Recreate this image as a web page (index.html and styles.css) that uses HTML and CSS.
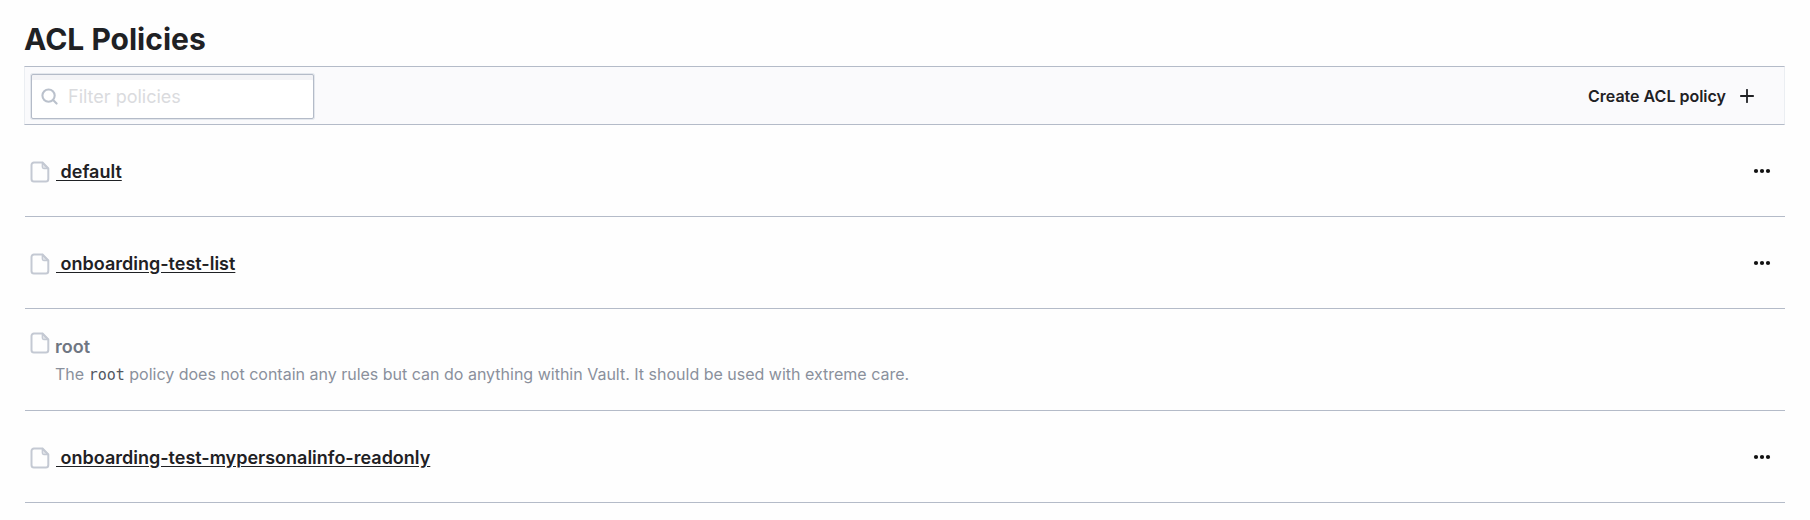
FILE: index.html
```html
<!DOCTYPE html>
<html lang="en">
<head>
<meta charset="utf-8">
<title>ACL Policies</title>
<link rel="stylesheet" href="styles.css">
</head>
<body>
<svg class="sprite" aria-hidden="true">
  <symbol id="file" viewBox="0 0 20 22">
    <path d="M4 1.500H12.500L18.300 7.500V18a2.500 2.500 0 0 1-2.500 2.500H4A2.500 2.500 0 0 1 1.500 18V4A2.500 2.500 0 0 1 4 1.500Z" fill="none" stroke="currentColor" stroke-width="2" stroke-linejoin="round"/>
    <path d="M12.300 1.500V6a1.500 1.500 0 0 0 1.500 1.500H18.300Z" fill="currentColor" fill-opacity=".5" stroke="currentColor" stroke-width="1.300" stroke-linejoin="round"/>
  </symbol>
  <symbol id="more" viewBox="0 0 18 6">
    <g fill="currentColor"><circle cx="3" cy="3" r="2.100"/><circle cx="9" cy="3" r="2.100"/><circle cx="15" cy="3" r="2.100"/></g>
  </symbol>
</svg>
<main class="page">
  <h1 class="title">ACL Policies</h1>
  <div class="toolbar">
    <label class="filter">
      <svg class="filter-icon" viewBox="0 0 18 18" aria-hidden="true"><g fill="none" stroke="currentColor" stroke-width="2.200" stroke-linecap="round"><circle cx="8" cy="8" r="6.500"/><path d="M12.800 12.800L16.500 16.500"/></g></svg>
      <input class="filter-input" type="text" placeholder="Filter policies" aria-label="Filter policies">
    </label>
    <a class="create" href="#">Create ACL policy
      <svg class="plus" viewBox="0 0 14 14" aria-hidden="true"><path d="M7 .8V13.200M.8 7H13.200" fill="none" stroke="currentColor" stroke-width="1.800" stroke-linecap="round"/></svg>
    </a>
  </div>
  <ul class="list">
    <li class="row">
      <svg class="file" aria-hidden="true"><use href="#file"/></svg>
      <a class="name" href="#">&nbsp;default</a>
      <button class="menu" type="button" aria-label="More options"><svg class="dots"><use href="#more"/></svg></button>
    </li>
    <li class="row">
      <svg class="file" aria-hidden="true"><use href="#file"/></svg>
      <a class="name" href="#">&nbsp;onboarding-test-list</a>
      <button class="menu" type="button" aria-label="More options"><svg class="dots"><use href="#more"/></svg></button>
    </li>
    <li class="row row-static">
      <svg class="file" aria-hidden="true"><use href="#file"/></svg>
      <div class="info">
        <span class="root-name">root</span>
        <p class="note">The <code class="code">root</code> policy does not contain any rules but can do anything within Vault. It should be used with extreme care.</p>
      </div>
    </li>
    <li class="row">
      <svg class="file" aria-hidden="true"><use href="#file"/></svg>
      <a class="name" href="#">&nbsp;onboarding-test-mypersonalinfo-readonly</a>
      <button class="menu" type="button" aria-label="More options"><svg class="dots"><use href="#more"/></svg></button>
    </li>
  </ul>
</main>
</body>
</html>
```
FILE: styles.css
```css
* { box-sizing: border-box; }
body {
  margin: 0;
  background: #fefefe;
  color: #1f2124;
  font-family: Inter, "Liberation Sans", sans-serif;
}
.sprite { display: none; }
.page { padding: 19px 25px 0 24px; }
.title {
  margin: 0;
  padding-bottom: 7px;
  font-size: 30px;
  line-height: 40px;
  font-weight: 700;
}
.toolbar {
  display: flex;
  align-items: center;
  justify-content: space-between;
  padding: 7px 30px 5px 6px;
  background: #fafafc;
  border: 1px solid #ebeef2;
  border-top-color: #b4bbc8;
  border-bottom-color: #b4bbc8;
}
.filter {
  display: flex;
  align-items: center;
  gap: 10px;
  width: 283px;
  height: 45px;
  padding: 0 9px;
  background: #fff;
  border: 1px solid #b4bbc8;
  border-radius: 2px;
  box-shadow: inset 0 5px 0 #f3f3f6, 0 0 0 1px #e3e7ed;
}
.filter-icon { width: 17px; height: 17px; color: #bac1cc; }
.filter-input {
  flex: 1;
  min-width: 0;
  padding: 0;
  border: 0;
  outline: 0;
  background: none;
  color: inherit;
  font: 400 18px/24px Inter, "Liberation Sans", sans-serif;
}
.filter-input::placeholder { color: #dadbde; opacity: 1; }
.create {
  display: flex;
  align-items: center;
  gap: 14px;
  padding-bottom: 2px;
  color: #1f2124;
  font-size: 16px;
  line-height: 24px;
  font-weight: 600;
  text-decoration: none;
}
.plus { width: 14px; height: 14px; }
.list { margin: 0; padding: 0 0 0 1px; list-style: none; }
.row {
  display: flex;
  align-items: center;
  gap: 6px;
  min-height: 92px;
  padding: 3px 14px 0 5px;
  border-bottom: 1px solid #b4bbc8;
}
.file { width: 20px; height: 22px; flex: none; color: #c4c9d3; }
.name {
  color: #1f2124;
  font-size: 18px;
  line-height: 24px;
  font-weight: 600;
  text-underline-offset: 2px;
}
.menu {
  display: flex;
  margin-left: auto;
  padding: 8px 0 11px;
  border: 0;
  background: none;
  color: #111;
}
.dots { width: 18px; height: 6px; }
.row-static { align-items: flex-start; gap: 5px; padding-top: 23px; padding-bottom: 22px; }
.info { padding-top: 3px; color: #6f7682; }
.root-name { display: block; font-size: 18px; line-height: 24px; font-weight: 600; }
.note { margin: 1px 0 0; font-size: 16px; line-height: 28px; color: #8a909c; }
.code { font: 15px "DejaVu Sans Mono", monospace; color: #525761; }
```
